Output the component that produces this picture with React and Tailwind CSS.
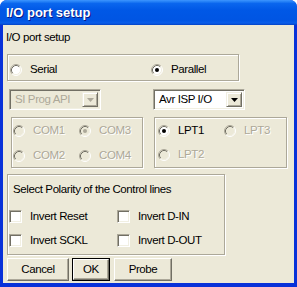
import React from 'react';

const font = { fontFamily: '"Liberation Sans", Arial, sans-serif' };
const txt = 'text-[11.5px] leading-[13px] tracking-[-0.4px]';

// classic win32 radio, 12x12
const Radio = ({ checked = false, disabled = false }) => (
  <svg width="12" height="12" viewBox="0 0 12 12" className="shrink-0">
    <circle cx="6" cy="6" r="5" fill={disabled ? '#ECE9D8' : '#FFFFFF'} />
    <path d="M2.11 9.89 A5.5 5.5 0 0 1 9.89 2.11" fill="none" stroke="#ACA899" strokeWidth="1" />
    <path d="M9.89 2.11 A5.5 5.5 0 0 1 2.11 9.89" fill="none" stroke="#FFFFFF" strokeWidth="1" />
    <path d="M2.82 9.18 A4.5 4.5 0 0 1 9.18 2.82" fill="none" stroke="#716F64" strokeWidth="1" />
    <path d="M9.18 2.82 A4.5 4.5 0 0 1 2.82 9.18" fill="none" stroke="#F1EFE2" strokeWidth="1" />
    {checked && <circle cx="6" cy="6" r="2" fill={disabled ? '#ACA899' : '#000000'} />}
  </svg>
);

const Check = () => (
  <span className="block w-[13px] h-[13px] shrink-0 bg-white border border-t-[#ACA899] border-l-[#ACA899] border-r-white border-b-white shadow-[inset_1px_1px_0_#716F64,inset_-1px_-1px_0_#F1EFE2]" />
);

const Option = ({ label, checked, disabled, w }) => (
  <span className="flex items-center h-[13px]" style={{ width: w }}>
    <Radio checked={checked} disabled={disabled} />
    <span className={`ml-[8px] ${txt} ${disabled ? 'text-[#ACA899] [text-shadow:1px_1px_0_#fff]' : 'text-black'}`}>
      {label}
    </span>
  </span>
);

const CheckOption = ({ label, w }) => (
  <span className="flex items-center h-[13px]" style={{ width: w }}>
    <Check />
    <span className={`ml-[8px] ${txt} text-black`}>{label}</span>
  </span>
);

const Combo = ({ value, disabled }) => (
  <div className={`flex w-[92px] h-[21px] border border-t-[#ACA899] border-l-[#ACA899] border-r-white border-b-white shadow-[inset_1px_1px_0_#716F64,inset_-1px_-1px_0_#F1EFE2] p-[2px] ${disabled ? 'bg-[#ECE9D8]' : 'bg-white'}`}>
    <div className={`flex-1 pl-[3px] pt-[1px] ${txt} ${disabled ? 'text-[#ACA899]' : 'text-black'}`}>{value}</div>
    <div className="flex items-center justify-center w-[16px] h-[15px] bg-[#ECE9D8] border border-t-[#F1EFE2] border-l-[#F1EFE2] border-r-[#716F64] border-b-[#716F64] shadow-[inset_1px_1px_0_#fff,inset_-1px_-1px_0_#ACA899]">
      <svg width="7" height="4" viewBox="0 0 7 4">
        <path d="M0 0 H7 L3.5 4 Z" fill={disabled ? '#ACA899' : '#000'} />
      </svg>
    </div>
  </div>
);

const Button = ({ children, w, isDefault }) => (
  <div className={`h-[23px] ${isDefault ? 'border border-black' : ''}`} style={{ width: w }}>
    <div className={`h-full flex items-center justify-center bg-[#ECE9D8] border border-t-white border-l-white border-r-[#716F64] border-b-[#716F64] shadow-[inset_-1px_-1px_0_#ACA899] ${txt} text-black`}>
      {children}
    </div>
  </div>
);

const etched = 'border border-[#ACA899] shadow-[1px_1px_0_#fff,inset_1px_1px_0_#fff]';

export default function App() {
  return (
    <div className="w-[297px] h-[287px] flex flex-col bg-[#0831D9] rounded-t-[7px] overflow-hidden" style={font}>
      {/* title bar */}
      <div className="h-[25px] shrink-0 flex items-center pl-[6px] bg-[linear-gradient(180deg,#3D95FF_0%,#2A86F8_5%,#0A66EE_14%,#0058E6_40%,#0055E3_80%,#0A5EEA_92%,#0442C4_100%)]">
        <span className="text-white font-bold text-[13px] [text-shadow:1px_1px_0_#0A1883]">I/O port setup</span>
      </div>

      {/* client */}
      <div className="flex-1 mx-[3px] mb-[4px] bg-[#ECE9D8] pl-[4px]">
        <div className={`mt-[6px] ml-[-1px] ${txt} text-black`}>I/O port setup</div>

        {/* serial / parallel */}
        <div className={`mt-[10px] w-[232px] h-[27px] ${etched}`}>
          <div className="flex mt-[8px] ml-[2px]">
            <Option label="Serial" w={141} />
            <Option label="Parallel" checked />
          </div>
        </div>

        {/* combos */}
        <div className="flex mt-[8px] ml-[2px]">
          <Combo value="SI Prog API" disabled />
          <div className="ml-[52px]">
            <Combo value="Avr ISP I/O" />
          </div>
        </div>

        {/* port groups */}
        <div className="flex mt-[7px] ml-[4px]">
          <div className={`w-[132px] h-[51px] ${etched}`}>
            <div className="flex mt-[6px] ml-[1px]">
              <Option label="COM1" disabled w={66} />
              <Option label="COM3" checked disabled />
            </div>
            <div className="flex mt-[12px] ml-[1px]">
              <Option label="COM2" disabled w={66} />
              <Option label="COM4" disabled />
            </div>
          </div>
          <div className={`ml-[11px] w-[133px] h-[51px] ${etched}`}>
            <div className="flex mt-[6px] ml-[3px]">
              <Option label="LPT1" checked w={66} />
              <Option label="LPT3" disabled />
            </div>
            <div className="flex mt-[11px] ml-[3px]">
              <Option label="LPT2" disabled />
            </div>
          </div>
        </div>

        {/* polarity */}
        <div className={`mt-[6px] w-[218px] h-[81px] ${etched}`}>
          <div className={`mt-[8px] ml-[5px] ${txt} text-black`}>
            Select Polarity of the Control lines
          </div>
          <div className="flex mt-[14px] ml-[1px]">
            <CheckOption label="Invert Reset" w={108} />
            <CheckOption label="Invert D-IN" />
          </div>
          <div className="flex mt-[11px] ml-[1px]">
            <CheckOption label="Invert SCKL" w={108} />
            <CheckOption label="Invert D-OUT" />
          </div>
        </div>

        {/* buttons */}
        <div className="flex mt-[3px]">
          <Button w={62}>Cancel</Button>
          <div className="ml-[3px]">
            <Button w={38} isDefault>OK</Button>
          </div>
          <div className="ml-[4px]">
            <Button w={58}>Probe</Button>
          </div>
        </div>
      </div>
    </div>
  );
}
